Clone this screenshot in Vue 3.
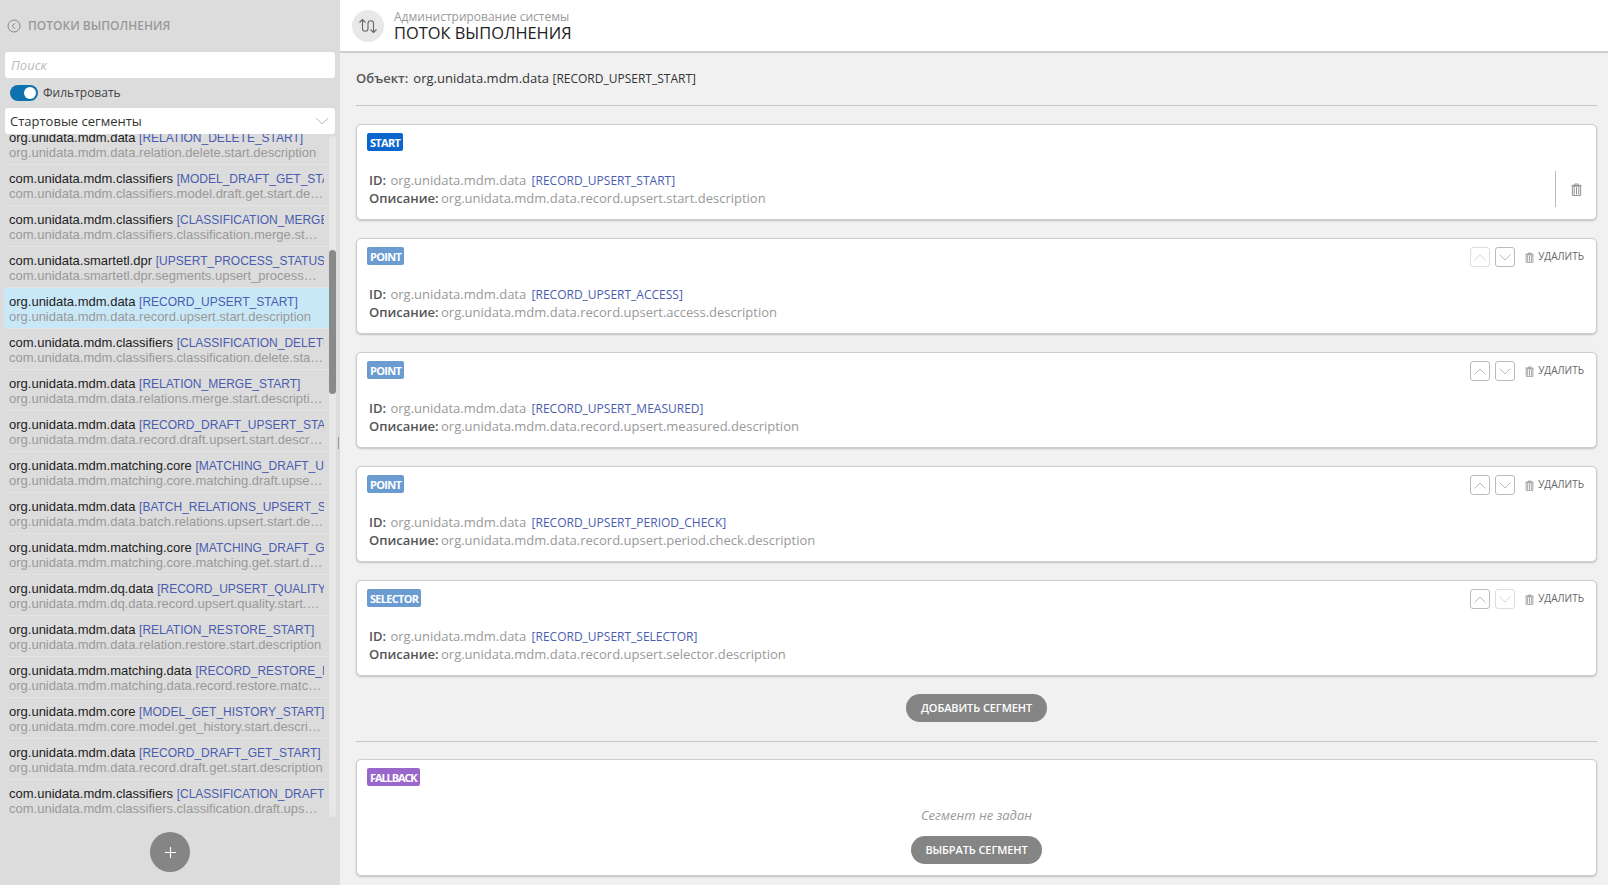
<template>
  <div class="page">
    <aside class="sidebar">
      <div class="side-title">
        <svg class="back-icon" viewBox="0 0 14 14" fill="none" stroke="currentColor" stroke-width="1"><circle cx="7" cy="7" r="6"/><path d="M8 4.200 5.200 7 8 9.800"/></svg>
        <span>ПОТОКИ ВЫПОЛНЕНИЯ</span>
      </div>
      <div class="search">Поиск</div>
      <div class="filter-row">
        <span class="toggle"><span class="knob"></span></span>
        <span>Фильтровать</span>
      </div>
      <div class="select">
        <span>Стартовые сегменты</span>
        <svg viewBox="0 0 14 8" fill="none" stroke="currentColor" stroke-width="1"><path d="M1 1l6 6 6-6"/></svg>
      </div>
      <div class="list-wrap">
        <div class="list">
          <div class="list-inner">
            <div v-for="item in items" :key="item.code" class="item" :class="{ active: item.code === 'RECORD_UPSERT_START' }">
              <div class="item-top">{{ item.ns }} <span class="code small-code">[{{ item.code }}]</span></div>
              <div class="item-desc">{{ item.desc }}</div>
            </div>
          </div>
        </div>
        <div class="track"><div class="thumb"></div></div>
      </div>
      <div class="side-foot">
        <button class="add-btn">
          <svg viewBox="0 0 14 14" stroke="currentColor" stroke-width="1.2"><path d="M7 1v12M1 7h12"/></svg>
        </button>
      </div>
      <div class="grip"></div>
    </aside>

    <main class="main">
      <header class="topbar">
        <div class="top-icon">
          <svg viewBox="0 0 20 20" fill="none" stroke="currentColor" stroke-width="1.1"><path d="M1.5 6.5 4.500 3.500 7.500 6.500M4.500 3.500V12.500a2.700 2.700 0 0 0 5.500 0V7.500a2.700 2.700 0 0 1 5.500 0V16.500M12.500 13.500l3 3 3-3"/></svg>
        </div>
        <div>
          <div class="top-sub">Администрирование системы</div>
          <div class="top-title">ПОТОК ВЫПОЛНЕНИЯ</div>
        </div>
      </header>

      <section class="content">
        <div class="object-row">
          <span class="object-label">Объект:</span>
          <span>org.unidata.mdm.data <span class="small-code">[RECORD_UPSERT_START]</span></span>
        </div>
        <hr class="line" />

        <div class="cards">
          <div v-for="(seg, i) in segments" :key="seg.code" class="card">
            <div class="card-head">
              <span class="badge" :class="seg.type.toLowerCase()">{{ seg.type }}</span>
              <div v-if="i > 0" class="controls">
                <span class="arrow-btn" :class="{ off: i === 1 }">
                  <svg viewBox="0 0 12 7" fill="none" stroke="currentColor" stroke-width=".8"><path d="M.5 6.500 6 1l5.500 5.500"/></svg>
                </span>
                <span class="arrow-btn" :class="{ off: i === segments.length - 1 }">
                  <svg viewBox="0 0 12 7" fill="none" stroke="currentColor" stroke-width=".8"><path d="M.5.500 6 6l5.500-5.500"/></svg>
                </span>
                <span class="remove">
                  <svg class="trash small" viewBox="0 0 12 14" fill="none" stroke="currentColor"><path d="M.5 2.500h11M4 2.500V1h4v1.500M1.500 3.500h9V13.500h-9zM3.500 4.500v8M6 4.500v8M8.500 4.500v8"/></svg>
                  <span class="remove-text">УДАЛИТЬ</span>
                </span>
              </div>
            </div>
            <div class="card-body">
              <div class="card-text">
                <div><span class="lbl id-lbl">ID:</span> <span class="val">{{ seg.ns }}</span> <span class="code small-code id-code">[{{ seg.code }}]</span></div>
                <div><span class="lbl desc-lbl">Описание:</span> <span class="val">{{ seg.desc }}</span></div>
              </div>
              <div v-if="i === 0" class="start-side">
                <svg class="trash" viewBox="0 0 12 14" fill="none" stroke="currentColor"><path d="M.5 2.500h11M4 2.500V1h4v1.500M1.500 3.500h9V13.500h-9zM3.500 4.500v8M6 4.500v8M8.500 4.500v8"/></svg>
              </div>
            </div>
          </div>
        </div>

        <div class="add-row"><button class="pill add-seg">ДОБАВИТЬ СЕГМЕНТ</button></div>
        <hr class="line" />

        <div class="card fallback-card">
          <div class="card-head"><span class="badge fallback">FALLBACK</span></div>
          <div class="empty">
            <div class="empty-text">Сегмент не задан</div>
            <button class="pill pick-seg">ВЫБРАТЬ СЕГМЕНТ</button>
          </div>
        </div>
      </section>
    </main>
  </div>
</template>

<script setup>
const items = [
  { ns: 'org.unidata.mdm.data', code: 'RELATION_DELETE_START', desc: 'org.unidata.mdm.data.relation.delete.start.description' },
  { ns: 'com.unidata.mdm.classifiers', code: 'MODEL_DRAFT_GET_START', desc: 'com.unidata.mdm.classifiers.model.draft.get.start.description' },
  { ns: 'com.unidata.mdm.classifiers', code: 'CLASSIFICATION_MERGE_START', desc: 'com.unidata.mdm.classifiers.classification.merge.start.description' },
  { ns: 'com.unidata.smartetl.dpr', code: 'UPSERT_PROCESS_STATUS_START', desc: 'com.unidata.smartetl.dpr.segments.upsert_process_status.start.description' },
  { ns: 'org.unidata.mdm.data', code: 'RECORD_UPSERT_START', desc: 'org.unidata.mdm.data.record.upsert.start.description' },
  { ns: 'com.unidata.mdm.classifiers', code: 'CLASSIFICATION_DELETE_START', desc: 'com.unidata.mdm.classifiers.classification.delete.start.description' },
  { ns: 'org.unidata.mdm.data', code: 'RELATION_MERGE_START', desc: 'org.unidata.mdm.data.relations.merge.start.description' },
  { ns: 'org.unidata.mdm.data', code: 'RECORD_DRAFT_UPSERT_START', desc: 'org.unidata.mdm.data.record.draft.upsert.start.description' },
  { ns: 'org.unidata.mdm.matching.core', code: 'MATCHING_DRAFT_UPSERT_START', desc: 'org.unidata.mdm.matching.core.matching.draft.upsert.start.description' },
  { ns: 'org.unidata.mdm.data', code: 'BATCH_RELATIONS_UPSERT_START', desc: 'org.unidata.mdm.data.batch.relations.upsert.start.description' },
  { ns: 'org.unidata.mdm.matching.core', code: 'MATCHING_DRAFT_GET_START', desc: 'org.unidata.mdm.matching.core.matching.get.start.description' },
  { ns: 'org.unidata.mdm.dq.data', code: 'RECORD_UPSERT_QUALITY_START', desc: 'org.unidata.mdm.dq.data.record.upsert.quality.start.description' },
  { ns: 'org.unidata.mdm.data', code: 'RELATION_RESTORE_START', desc: 'org.unidata.mdm.data.relation.restore.start.description' },
  { ns: 'org.unidata.mdm.matching.data', code: 'RECORD_RESTORE_MATCHING_START', desc: 'org.unidata.mdm.matching.data.record.restore.matching.start.description' },
  { ns: 'org.unidata.mdm.core', code: 'MODEL_GET_HISTORY_START', desc: 'org.unidata.mdm.core.model.get_history.start.description' },
  { ns: 'org.unidata.mdm.data', code: 'RECORD_DRAFT_GET_START', desc: 'org.unidata.mdm.data.record.draft.get.start.description' },
  { ns: 'com.unidata.mdm.classifiers', code: 'CLASSIFICATION_DRAFT_UPSERT_START', desc: 'com.unidata.mdm.classifiers.classification.draft.upsert.start.description' }
]

const segments = [
  { type: 'START', ns: 'org.unidata.mdm.data', code: 'RECORD_UPSERT_START', desc: 'org.unidata.mdm.data.record.upsert.start.description' },
  { type: 'POINT', ns: 'org.unidata.mdm.data', code: 'RECORD_UPSERT_ACCESS', desc: 'org.unidata.mdm.data.record.upsert.access.description' },
  { type: 'POINT', ns: 'org.unidata.mdm.data', code: 'RECORD_UPSERT_MEASURED', desc: 'org.unidata.mdm.data.record.upsert.measured.description' },
  { type: 'POINT', ns: 'org.unidata.mdm.data', code: 'RECORD_UPSERT_PERIOD_CHECK', desc: 'org.unidata.mdm.data.record.upsert.period.check.description' },
  { type: 'SELECTOR', ns: 'org.unidata.mdm.data', code: 'RECORD_UPSERT_SELECTOR', desc: 'org.unidata.mdm.data.record.upsert.selector.description' }
]
</script>

<style scoped>
.page { display: flex; height: 885px; overflow: hidden; font-family: "Open Sans", sans-serif; font-size: 13px; color: #333; }

.sidebar { position: relative; width: 340px; flex: none; display: flex; flex-direction: column; background: #dcdcdc; }
.side-title { height: 51px; padding-bottom: 1px; flex: none; display: flex; align-items: center; gap: 7px; padding-left: 7px; color: #999; font-size: 12px; font-weight: 600; }
.back-icon { width: 14px; height: 14px; color: #8a8a8a; }
.search { height: 26px; flex: none; margin: 0 5px; padding-left: 6px; background: #fff; border-radius: 3px; color: #bbb; font-style: italic; line-height: 26px; }
.filter-row { height: 28px; padding-bottom: 2px; flex: none; display: flex; align-items: center; gap: 5px; padding-left: 10px; font-size: 12px; color: #444; }
.toggle { width: 28px; height: 16px; margin-top: 2px; border-radius: 8px; background: #0d72ad; display: flex; justify-content: flex-end; align-items: center; padding-right: 2px; box-sizing: border-box; }
.knob { width: 12px; height: 12px; border-radius: 50%; background: #fff; }
.select { position: relative; z-index: 1; height: 26px; flex: none; margin: 0 5px; padding: 0 6px 0 5px; display: flex; align-items: center; justify-content: space-between; background: #fff; border-radius: 3px; color: #333; }
.select svg { width: 14px; height: 8px; color: #bbb; }

.list-wrap { height: 683px; flex: none; display: flex; padding-left: 4px; }
.list { width: 325px; flex: none; overflow: hidden; }
.list-inner { margin-top: -10px; }
.item { height: 41px; box-sizing: border-box; padding: 6px 5px 4px; border-bottom: 1px solid #e3e3e3; font-family: "Liberation Sans", sans-serif; font-size: 13px; line-height: 15px; color: #222; }
.item.active { background: #c9e8f7; }
.item-top { white-space: nowrap; overflow: hidden; }
.item-desc { white-space: nowrap; overflow: hidden; text-overflow: ellipsis; color: #999; }
.code { color: #4a5cb0; }
.small-code { font-size: 12px; line-height: 1; }
.track { width: 7px; margin-top: 2px; border-radius: 4px; background: #e7e7e7; }
.thumb { width: 7px; height: 144px; margin-top: 114px; border-radius: 4px; background: #8a8a8a; }
.side-foot { display: flex; justify-content: center; padding-top: 15px; }
.add-btn { width: 40px; height: 40px; padding: 0; border: none; border-radius: 50%; background: #858585; color: #fff; display: flex; align-items: center; justify-content: center; }
.add-btn svg { width: 13px; height: 13px; }
.grip { position: absolute; left: 338px; top: 437px; width: 2px; height: 12px; border-left: 1px solid #999; box-sizing: border-box; }

.main { flex: 1; min-width: 0; background: #f1f1f1; }
.topbar { height: 51px; display: flex; align-items: center; gap: 10px; padding-left: 12px; background: #fff; border-bottom: 2px solid #ccc; }
.top-icon { width: 32px; height: 32px; border-radius: 50%; background: #e8e8e8; color: #666; display: flex; align-items: center; justify-content: center; }
.top-icon svg { width: 20px; height: 20px; }
.top-sub { font-size: 12px; line-height: 15px; color: #999; }
.top-title { font-size: 16.4px; line-height: 18px; padding-bottom: 1px; color: #222; }

.content { padding: 0 11px 0 16px; }
.object-row { height: 50px; padding-bottom: 2px; display: flex; align-items: center; gap: 5px; }
.object-label { font-weight: 600; color: #555; }
.line { height: 1px; margin: 0; border: none; background: #c6c6c6; }

.cards { display: flex; flex-direction: column; gap: 18px; margin-top: 18px; }
.card { height: 96px; box-sizing: border-box; padding: 8px 12px 11px 10px; background: #fff; border: 1px solid #ccc; border-radius: 5px; box-shadow: 0 1px 2px rgba(0, 0, 0, 0.2); }
.card-head { height: 20px; display: flex; justify-content: space-between; align-items: flex-start; }
.badge { height: 18px; padding: 0 3px; border-radius: 2px; color: #fff; font-size: 11px; font-weight: 700; line-height: 19px; letter-spacing: -0.7px; }
.badge.start { background: #0a66cc; }
.badge.point, .badge.selector { background: #6a9bd1; }
.badge.fallback { background: #9966cc; letter-spacing: -1.1px; }
.controls { display: flex; align-items: center; }
.arrow-btn { width: 20px; height: 20px; box-sizing: border-box; margin-right: 5px; border: 1px solid #bbb; border-radius: 3px; color: #aaa; display: flex; align-items: center; justify-content: center; }
.arrow-btn.off { border-color: #ddd; color: #ccc; }
.arrow-btn svg { width: 12px; height: 7px; }
.remove { display: flex; align-items: center; gap: 4px; margin-left: 5px; font-size: 10px; color: #666; }
.remove-text { padding-bottom: 2px; }
.trash { width: 11px; height: 13px; color: #888; }
.trash.small { width: 9px; height: 11px; }
.card-body { display: flex; justify-content: space-between; margin-top: 18px; padding-left: 2px; line-height: 18px; }
.lbl { font-weight: 600; color: #555; }
.id-lbl { margin-right: 1px; }
.desc-lbl { margin-right: -1px; }
.id-code { margin-left: 2px; }
.val { color: #999; }
.start-side { width: 29px; height: 36px; box-sizing: border-box; padding-left: 15px; border-left: 1px solid #bbb; display: flex; align-items: center; }

.add-row { display: flex; justify-content: center; padding: 18px 0 19px; }
.pill { height: 28px; padding: 0 0 2px; border: none; border-radius: 14px; background: #858585; color: #fff; font-family: "Open Sans", sans-serif; font-size: 11px; font-weight: 600; letter-spacing: -0.1px; }
.add-seg { width: 141px; }
.pick-seg { width: 131px; }
.fallback-card { height: 117px; margin-top: 17px; }
.empty { display: flex; flex-direction: column; align-items: center; margin-top: 18px; padding-left: 2px; }
.empty-text { line-height: 18px; margin-bottom: 12px; font-style: italic; color: #999; }
</style>

<style>
html, body { overflow: hidden; }
</style>
